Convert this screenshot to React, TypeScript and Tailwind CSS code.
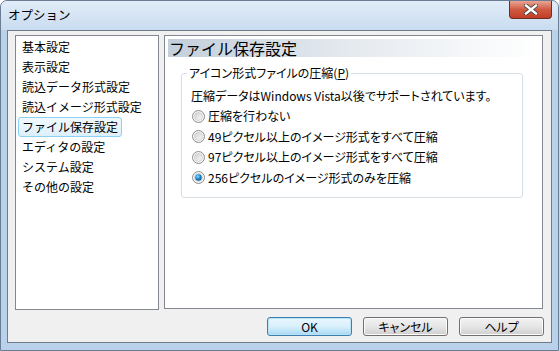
const jp = "font-['Noto_Sans_CJK_JP','Noto_Sans',sans-serif]";
const palt = "[font-feature-settings:'palt']";

const items = [
  "基本設定",
  "表示設定",
  "読込データ形式設定",
  "読込イメージ形式設定",
  "ファイル保存設定",
  "エディタの設定",
  "システム設定",
  "その他の設定",
];

const options = [
  "圧縮を行わない",
  "49ピクセル以上のイメージ形式をすべて圧縮",
  "97ピクセル以上のイメージ形式をすべて圧縮",
  "256ピクセルのイメージ形式のみを圧縮",
];

function Radio({ checked }: { checked: boolean }) {
  return (
    <svg width="13" height="13" viewBox="0 0 13 13" className="shrink-0">
      <defs>
        <linearGradient id="rg" x1="0" y1="0" x2="1" y2="1">
          <stop offset="0" stopColor="#d2d2d2" />
          <stop offset="1" stopColor="#f8f8f8" />
        </linearGradient>
        <radialGradient id="dot" cx="0.4" cy="0.35" r="0.7">
          <stop offset="0" stopColor="#8ae0ff" />
          <stop offset="0.5" stopColor="#1c8fd6" />
          <stop offset="1" stopColor="#0b4f8a" />
        </radialGradient>
      </defs>
      <circle cx="6.5" cy="6.5" r="6" fill="#f4f4f4" stroke="#8e8f8f" strokeWidth="1" />
      <circle cx="6.5" cy="6.5" r="4" fill="url(#rg)" stroke="#c4c4c4" strokeWidth="0.6" />
      {checked && <circle cx="6.5" cy="6.5" r="3.2" fill="url(#dot)" />}
    </svg>
  );
}

function Btn({ label, def }: { label: string; def?: boolean }) {
  return (
    <div
      className={`w-[85px] h-[19px] rounded-[3px] border flex items-center justify-center text-[12px] leading-none text-black ${palt} ${
        def
          ? "border-[#3c7fb1] bg-gradient-to-b from-[#eaf6fd] via-[#d9f0fc] to-[#a7d9f5] shadow-[inset_0_0_0_1px_#b8e2f8]"
          : "border-[#707070] bg-gradient-to-b from-[#f2f2f2] via-[#e6e6e6] to-[#cfcfcf] shadow-[inset_0_0_0_1px_#fcfcfc]"
      }`}
    >
      {label}
    </div>
  );
}

export default function App() {
  return (
    <div className={`w-[559px] h-[351px] ${jp} bg-[#b9d1ea] rounded-t-[7px] border border-[#6b7d92] flex flex-col overflow-hidden`}>
      {/* title bar */}
      <div className="h-[29px] shrink-0 flex items-start justify-between bg-gradient-to-b from-[#e1ecf8] to-[#c9dcf0]">
        <div className="pl-[7px] pt-[5px] text-[12.5px] text-black">オプション</div>
        <div className="mr-[6px] w-[43px] h-[18px] rounded-b-[4px] border border-t-0 border-[#6b2f25] bg-gradient-to-b from-[#e8a493] via-[#cf5a42] to-[#c23d24] flex items-center justify-center">
          <svg width="14" height="11" viewBox="0 0 14 11">
            <path d="M2 1.5 L12 9.5 M12 1.5 L2 9.5" stroke="#3b3b3b" strokeWidth="4" strokeLinecap="square" />
            <path d="M2 1.5 L12 9.5 M12 1.5 L2 9.5" stroke="#ffffff" strokeWidth="2.4" strokeLinecap="square" />
          </svg>
        </div>
      </div>

      {/* client */}
      <div className="mx-[6px] h-[313px] border border-[#6f7b89] bg-[#f0f0f0] flex flex-col px-[7px] pt-[4px]">
        <div className="flex gap-[5px]">
          <div className="w-[144px] h-[275px] border border-[#828790] bg-white px-[2px] pt-[1px] text-[12px] text-black">
            {items.map((it) =>
              it === "ファイル保存設定" ? (
                <div
                  key={it}
                  className="h-[20px] w-[104px] flex items-center pl-[3px] rounded-[3px] border border-[#8ad1f4] bg-gradient-to-b from-[#f1f9fe] to-[#dcf0fc]"
                >
                  {it}
                </div>
              ) : (
                <div key={it} className="h-[20px] flex items-center pl-[4px]">
                  {it}
                </div>
              )
            )}
          </div>

          <div className="w-[379px] h-[274px] border border-[#828790] bg-white p-[3px] flex flex-col">
            <div className="h-[18px] flex items-center pl-[1px] text-[16px] leading-none text-black bg-gradient-to-r from-[#c3cfdb] via-[#e5eaef] to-white">
              ファイル保存設定
            </div>
            <div className="relative ml-[13px] mt-[16px] w-[342px] h-[125px] border border-[#d5dfe5] rounded-[3px]">
              <div className={`absolute left-[5px] -top-[9px] bg-white px-[2px] text-[12px] leading-[16px] text-black ${palt}`}>
                アイコン形式ファイルの圧縮(<span className="underline">P</span>)
              </div>
              <div className={`pl-[9px] pt-[12px] text-[12px] text-black ${palt}`}>
                <div className="h-[20px] flex items-center">
                  圧縮データはWindows Vista以後でサポートされています。
                </div>
                {options.map((o, i) => (
                  <div key={o} className="h-[20.5px] flex items-center gap-[3px] pl-[1px]">
                    <Radio checked={i === 3} />
                    <span>{o}</span>
                  </div>
                ))}
              </div>
            </div>
          </div>
        </div>

        <div className="flex justify-end gap-[11px] mt-[7px]">
          <Btn label="OK" def />
          <Btn label="キャンセル" />
          <Btn label="ヘルプ" />
        </div>
      </div>
    </div>
  );
}
